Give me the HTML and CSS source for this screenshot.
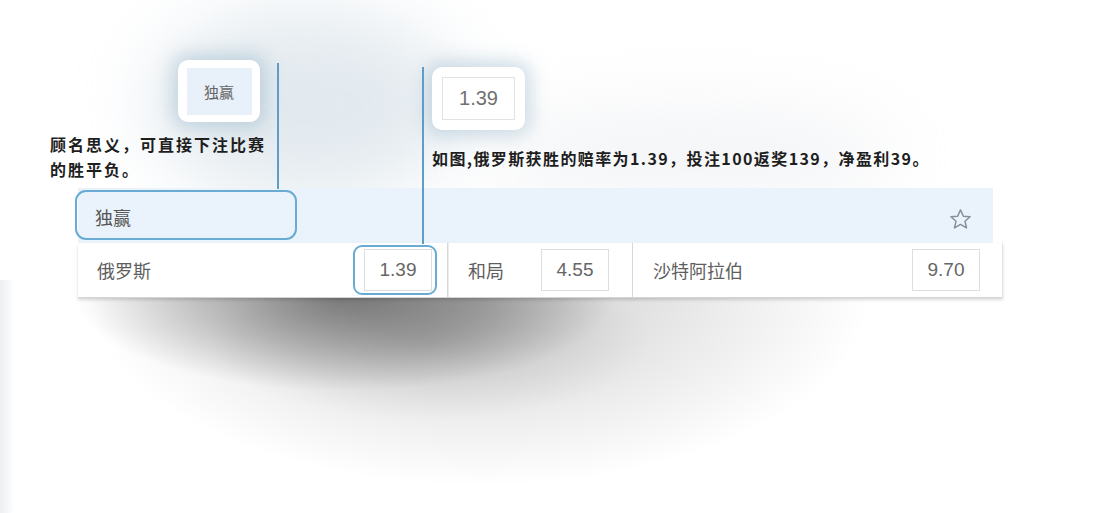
FILE: index.html
```html
<!DOCTYPE html>
<html lang="zh">
<head>
<meta charset="utf-8">
<link rel="stylesheet" href="styles.css">
</head>
<body>
<div class="stage">
  <div class="haze haze-a"></div>
  <div class="haze haze-b"></div>
  <div class="floor-shadow"></div>

  <div class="callout callout-market"><span class="callout-inner market">独赢</span></div>
  <div class="callout callout-odds"><span class="callout-inner odds">1.39</span></div>
  <div class="leader leader-a"></div>
  <div class="leader leader-b"></div>
  <p class="note note-a">顾名思义，可直接下注比赛<br>的胜平负。</p>
  <p class="note note-b">如图,俄罗斯获胜的赔率为1.39，投注100返奖139，净盈利39。</p>

  <div class="card">
    <div class="card-head">
      <span class="market-title">独赢</span>
      <svg class="star" viewBox="0 0 24 24" width="25" height="25"><path d="M12 2.8l2.7 6 6.5.6-4.9 4.3 1.5 6.4L12 16.7l-5.8 3.4 1.5-6.4-4.9-4.3 6.5-.6z" fill="none" stroke="#8a8f96" stroke-width="1.4" stroke-linejoin="round"/></svg>
    </div>
    <div class="card-row">
      <div class="cell cell-home"><span class="team">俄罗斯</span><span class="price">1.39</span></div>
      <div class="cell cell-draw"><span class="team">和局</span><span class="price">4.55</span></div>
      <div class="cell cell-away"><span class="team">沙特阿拉伯</span><span class="price">9.70</span></div>
    </div>
  </div>

  <div class="ring ring-market"></div>
  <div class="ring ring-odds"></div>
</div>
</body>
</html>
```

FILE: styles.css
```css
html, body {
  margin: 0;
  padding: 0;
  background: #ffffff;
}
body {
  font-family: "Noto Sans CJK SC", "Noto Sans", "Liberation Sans", sans-serif;
  overflow: hidden;
}
.stage {
  position: relative;
  width: 1110px;
  height: 513px;
  padding-top: 188px;
  box-sizing: border-box;
  overflow: hidden;
}
.stage::before {
  content: "";
  position: absolute;
  left: 0;
  top: 280px;
  width: 14px;
  height: 233px;
  background: linear-gradient(90deg, rgba(235,237,239,0.9), rgba(255,255,255,0));
}
.haze {
  position: absolute;
  border-radius: 50%;
  filter: blur(36px);
  pointer-events: none;
}
.haze-a {
  left: 150px;
  top: 10px;
  width: 310px;
  height: 190px;
  background: rgba(188, 204, 216, 0.42);
}
.haze-b {
  left: 480px;
  top: 105px;
  width: 420px;
  height: 100px;
  background: rgba(222, 225, 229, 0.32);
}
.floor-shadow {
  position: absolute;
  left: 0;
  top: 296px;
  width: 960px;
  height: 217px;
  background:
    radial-gradient(ellipse 270px 95px at 345px 0px, rgba(0,0,0,0.44), rgba(0,0,0,0.2) 55%, rgba(0,0,0,0) 100%),
    radial-gradient(ellipse 220px 80px at 430px 45px, rgba(0,0,0,0.12), rgba(0,0,0,0) 100%),
    radial-gradient(ellipse 390px 190px at 480px 0px, rgba(0,0,0,0.2), rgba(0,0,0,0.08) 60%, rgba(0,0,0,0) 100%);
}
.callout {
  position: absolute;
  background: #fff;
  border-radius: 10px;
  box-shadow: 0 0 18px 6px rgba(120, 160, 185, 0.35);
  display: flex;
  align-items: center;
  justify-content: center;
}
.callout-market {
  left: 178px;
  top: 60px;
  width: 82px;
  height: 62px;
}
.callout-odds {
  left: 432px;
  top: 67px;
  width: 93px;
  height: 63px;
}
.callout-inner {
  display: flex;
  align-items: center;
  justify-content: center;
  color: #666;
}
.callout-inner.market {
  width: 65px;
  height: 47px;
  background: #e8f0fa;
  font-size: 15px;
}
.callout-inner.odds {
  width: 71px;
  height: 41px;
  border: 1px solid #e2e2e2;
  font-family: "Liberation Sans", Arial, sans-serif;
  font-size: 20px;
  color: #707070;
}
.leader {
  position: absolute;
  width: 1.5px;
  background: #5f9cc6;
  z-index: 3;
}
.leader-a {
  left: 277px;
  top: 63px;
  height: 126px;
}
.leader-b {
  left: 422px;
  top: 67px;
  height: 177px;
}
.note {
  position: absolute;
  margin: 0;
  font-size: 16px;
  font-weight: 700;
  color: #1e1e1e;
  line-height: 25px;
}
.note-a {
  left: 50px;
  top: 132px;
  letter-spacing: 2px;
}
.note-b {
  left: 432px;
  top: 146px;
  letter-spacing: 1.4px;
}
.card {
  position: relative;
  z-index: 2;
  margin-left: 78px;
  width: 925px;
}
.card-head {
  width: 915px;
  height: 55px;
  background: #eaf3fb;
  display: flex;
  align-items: center;
  justify-content: space-between;
  padding: 0 20px 0 17px;
  box-sizing: border-box;
}
.market-title {
  font-size: 18px;
  color: #555;
  margin-top: 2px;
}
.star {
  margin-top: 8px;
}
.card-row {
  height: 55px;
  background: #fff;
  display: flex;
  border-bottom: 1px solid #d4d4d4;
  border-right: 1px solid #e4e4e4;
  box-shadow: 0 2px 3px rgba(0,0,0,0.15);
  box-sizing: border-box;
}
.cell {
  display: flex;
  align-items: center;
  justify-content: space-between;
  box-sizing: border-box;
}
.cell-home {
  width: 369px;
  padding: 0 15px 0 19px;
}
.cell-draw {
  width: 185px;
  padding: 0 23px 0 20px;
  border-left: 1px solid #d8d8d8;
  box-shadow: inset 4px 0 0 -3px #ececec;
}
.cell-away {
  flex: 1;
  padding: 0 22px 0 20px;
  border-left: 1px solid #d8d8d8;
}
.team {
  font-size: 18px;
  color: #5e5e5e;
}
.price {
  font-family: "Liberation Sans", Arial, sans-serif;
  font-size: 19px;
  color: #666;
  border: 1px solid #dedede;
  height: 42px;
  min-width: 68px;
  box-sizing: border-box;
  display: flex;
  align-items: center;
  justify-content: center;
}
.ring {
  position: absolute;
  border: 2px solid #6aabd3;
  z-index: 3;
  box-sizing: border-box;
}
.ring-market {
  left: 75px;
  top: 190px;
  width: 222px;
  height: 50px;
  border-radius: 11px;
}
.ring-odds {
  left: 353px;
  top: 245px;
  width: 84px;
  height: 50px;
  border-radius: 9px;
}
```
